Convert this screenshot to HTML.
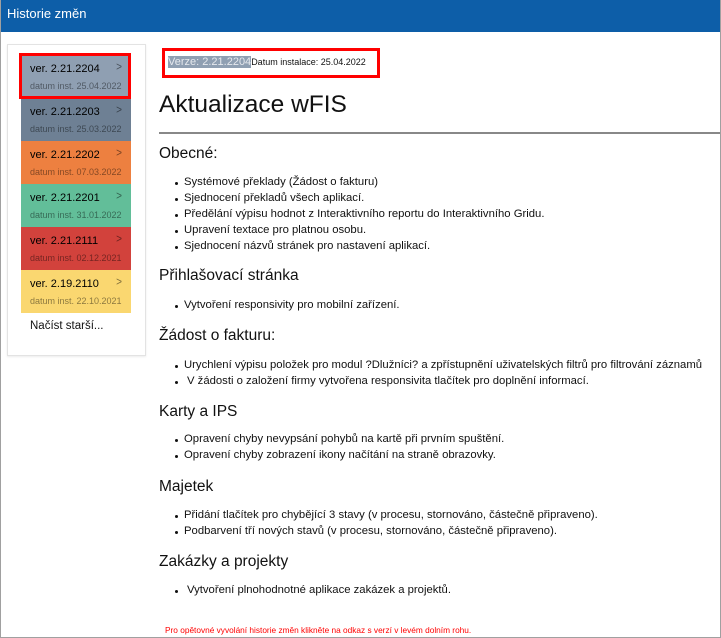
<!DOCTYPE html>
<html><head><meta charset="utf-8"><style>
*{margin:0;padding:0;box-sizing:border-box}
body{width:721px;height:638px;overflow:hidden;background:#fff;font-family:"Liberation Sans",sans-serif;color:#111;position:relative}
.frame{position:absolute;left:0;top:0;width:721px;height:638px;border:1px solid #a0a0a0;border-top:none}
.hdr{position:absolute;left:0;top:0;width:721px;height:32px;background:#0d5ea8;color:#fff;font-size:13px;padding:6px 0 0 7px}
.card{position:absolute;left:7px;top:44px;width:139px;height:312px;border:1px solid #e3e3e3;box-shadow:0 1px 2px rgba(0,0,0,.08)}
.it{position:absolute;left:21px;width:110px;height:43px}
.it .v{position:absolute;left:9px;top:8px;font-size:11px;color:#000}
.it .d{position:absolute;left:9px;top:26px;font-size:9px;color:rgba(0,0,0,.45)}
.it .a{position:absolute;right:9px;top:7px;font-size:10px;color:rgba(0,0,0,.5);transform:scaleY(1.2)}
.t{position:absolute;white-space:nowrap;font-size:11.3px}
.h{position:absolute;white-space:nowrap;font-size:15.5px;color:#111}
.b{position:absolute;left:175px;width:3px;height:3px;background:#111;border-radius:50%}
</style></head><body>
<div class="hdr">Historie změn</div>
<div class="card"></div>
<div class="it" style="top:55px;background:#8f9fb2"><span class="v">ver. 2.21.2204</span><span class="d">datum inst. 25.04.2022</span><span class="a">&gt;</span></div>
<div class="it" style="top:98px;background:#6e8094"><span class="v">ver. 2.21.2203</span><span class="d">datum inst. 25.03.2022</span><span class="a">&gt;</span></div>
<div class="it" style="top:141px;background:#ed8040"><span class="v">ver. 2.21.2202</span><span class="d">datum inst. 07.03.2022</span><span class="a">&gt;</span></div>
<div class="it" style="top:184px;background:#62be99"><span class="v">ver. 2.21.2201</span><span class="d">datum inst. 31.01.2022</span><span class="a">&gt;</span></div>
<div class="it" style="top:227px;background:#d2423c"><span class="v">ver. 2.21.2111</span><span class="d">datum inst. 02.12.2021</span><span class="a">&gt;</span></div>
<div class="it" style="top:270px;background:#fad770"><span class="v">ver. 2.19.2110</span><span class="d">datum inst. 22.10.2021</span><span class="a">&gt;</span></div>
<div style="position:absolute;left:19px;top:53px;width:112px;height:46px;border:3px solid #f00"></div>
<div class="t" style="left:30px;top:320px;font-size:11.5px">Načíst starší...</div>
<div style="position:absolute;left:162px;top:48px;width:218px;height:30px;border:3px solid #f00"></div>
<div class="t" style="left:168px;top:56px;font-size:11px"><span style="background:#8f9fb2;color:#e6e9ee;font-size:11px">Verze: 2.21.2204</span><span style="font-size:9px">Datum instalace: 25.04.2022</span></div>
<div class="h" style="left:159px;top:91px;font-size:24.5px">Aktualizace wFIS</div>
<div style="position:absolute;left:159px;top:132px;width:562px;height:2px;background:#888"></div>
<div class="h" style="left:159px;top:145px">Obecné:</div>
<div class="b" style="top:182px"></div><div class="t" style="left:184px;top:176px">Systémové překlady (Žádost o fakturu)</div>
<div class="b" style="top:198px"></div><div class="t" style="left:184px;top:192px">Sjednocení překladů všech aplikací.</div>
<div class="b" style="top:214px"></div><div class="t" style="left:184px;top:208px">Předělání výpisu hodnot z Interaktivního reportu do Interaktivního Gridu.</div>
<div class="b" style="top:230px"></div><div class="t" style="left:184px;top:224px">Upravení textace pro platnou osobu.</div>
<div class="b" style="top:246px"></div><div class="t" style="left:184px;top:240px">Sjednocení názvů stránek pro nastavení aplikací.</div>
<div class="h" style="left:159px;top:267px">Přihlašovací stránka</div>
<div class="b" style="top:305px"></div><div class="t" style="left:184px;top:299px">Vytvoření responsivity pro mobilní zařízení.</div>
<div class="h" style="left:159px;top:327px">Žádost o fakturu:</div>
<div class="b" style="top:365px"></div><div class="t" style="left:184px;top:359px;width:534px;overflow:hidden">Urychlení výpisu položek pro modul ?Dlužníci? a zpřístupnění uživatelských filtrů pro filtrování záznamů</div>
<div class="b" style="top:381px"></div><div class="t" style="left:187px;top:375px">V žádosti o založení firmy vytvořena responsivita tlačítek pro doplnění informací.</div>
<div class="h" style="left:159px;top:403px">Karty a IPS</div>
<div class="b" style="top:439px"></div><div class="t" style="left:184px;top:433px">Opravení chyby nevypsání pohybů na kartě při prvním spuštění.</div>
<div class="b" style="top:455px"></div><div class="t" style="left:184px;top:449px">Opravení chyby zobrazení ikony načítání na straně obrazovky.</div>
<div class="h" style="left:159px;top:478px">Majetek</div>
<div class="b" style="top:515px"></div><div class="t" style="left:184px;top:509px">Přidání tlačítek pro chybějící 3 stavy (v procesu, stornováno, částečně připraveno).</div>
<div class="b" style="top:531px"></div><div class="t" style="left:184px;top:525px">Podbarvení tří nových stavů (v procesu, stornováno, částečně připraveno).</div>
<div class="h" style="left:159px;top:553px">Zakázky a projekty</div>
<div class="b" style="top:590px"></div><div class="t" style="left:187px;top:584px">Vytvoření plnohodnotné aplikace zakázek a projektů.</div>
<div class="t" style="left:165px;top:625px;font-size:8.3px;color:#f00">Pro opětovné vyvolání historie změn klikněte na odkaz s verzí v levém dolním rohu.</div>
<div class="frame"></div>
</body></html>
